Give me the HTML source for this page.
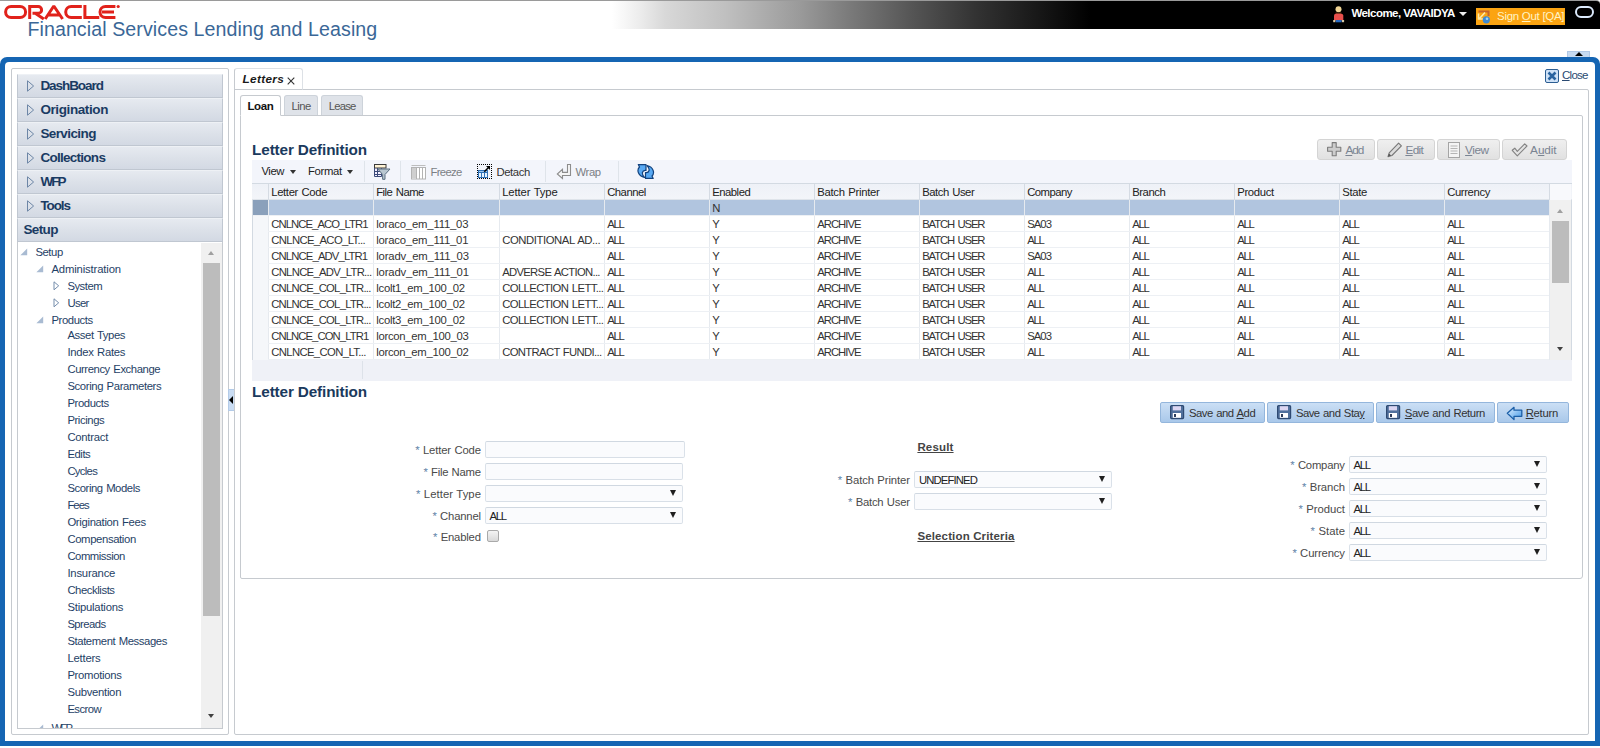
<!DOCTYPE html>
<html><head><meta charset="utf-8"><title>Letters</title>
<style>
*{box-sizing:border-box;margin:0;padding:0}
html,body{width:1600px;height:748px;overflow:hidden;background:#fff;font-family:"Liberation Sans",sans-serif;font-size:11px;color:#333}
.abs{position:absolute}
#hdr{position:absolute;left:0;top:0;width:1600px;height:28.6px;background:linear-gradient(to right,#fff 0,#fff 612px,#ececec 640px,#d8d8d8 665px,#c0c0c0 725px,#9a9a9a 800px,#7a7a7a 850px,#555 912px,#333 975px,#181818 1037px,#000 1090px,#000 1600px);border-top:1px solid #9a9a9a;border-radius:0 4px 0 0}
#frame{position:absolute;left:0;top:57px;width:1600px;height:689px;background:#1565b3;border-radius:7px 7px 0 0}
#frameIn{position:absolute;left:5px;top:5px;width:1590px;height:679px;background:#fff;border-radius:4px 4px 0 0}
.t{position:absolute;white-space:nowrap;line-height:1}
.t i{font-style:normal;color:#5f84a8}
.acc{position:absolute;left:17px;width:206px;height:24px;background:linear-gradient(#e6eaf0 0,#dce1e9 50%,#d3d9e3 100%);border:1px solid #c0c7d1;border-top-color:#eef1f5}
.inp{position:absolute;height:17px;border:1px solid;border-color:#d0d8e1 #dae1e9 #d8dfe7 #dae1e9;border-radius:2px;background:#fafbfd}
.inp b{position:absolute;right:6px;top:4px;width:0;height:0;border-left:3.5px solid transparent;border-right:3.5px solid transparent;border-top:6px solid #1f1f1f}
.btn{position:absolute;top:139px;height:21px;border:1px solid #d4d4d4;border-radius:3px;background:linear-gradient(#efefef,#e1e1e1)}
.sbtn{position:absolute;top:402px;height:21px;border:1px solid #94b6dc;border-radius:2px;background:linear-gradient(#cbdff5,#a9c8ea)}
u{text-decoration:underline}
</style></head><body>

<div id="hdr"></div>
<svg class="abs" style="left:0;top:0" width="124" height="24" viewBox="0 0 124 24">
<g fill="none" stroke="#e1221b" stroke-width="3" stroke-linejoin="miter">
<rect x="5.6" y="6.5" width="20" height="11" rx="5.5"/>
<path d="M29.7 19V6.5H38.2a3.4 3.4 0 0 1 0 6.8H32.5M35.2 13.3L43.8 19"/>
<path d="M45.2 19L53.8 6L62.6 19M48.5 15H59.5" stroke-miterlimit="1"/>
<path d="M81.8 6.500H71.200a5.500 5.500 0 0 0 0 11H81.800"/>
<path d="M84.900 5V17.500H99.300"/>
<path d="M115.400 6.500H105.500a5.500 5.500 0 0 0 0 11H115.400M102 12H114"/>
</g><circle cx="118.200" cy="6.500" r="1.600" fill="#e1221b"/></svg>
<div class="t" style="left:27.40px;top:20px;font-size:19.6px;color:#3a6797;letter-spacing:0.094px;">Financial Services Lending and Leasing</div>
<svg class="abs" style="left:1330px;top:4px" width="18" height="22" viewBox="0 0 18 22">
<circle cx="8.5" cy="5.3" r="3" fill="#f1d595"/><path d="M5.5 8.5h6v1.5h-6z" fill="#5a2a10"/>
<path d="M4 11.5Q4 9.7 6 9.7H11Q13.3 9.7 13.3 11.5V16.5H4Z" fill="#e9504c"/>
<rect x="3.2" y="16" width="2.2" height="2.2" fill="#d9c9a3"/><rect x="11.9" y="16" width="2.2" height="2.2" fill="#d9c9a3"/>
<rect x="5.8" y="16" width="5.8" height="2.3" fill="#2a6cc4"/></svg>
<div class="t" style="left:1351.40px;top:8px;font-size:11.5px;color:#ffffff;letter-spacing:-0.530px;font-weight:bold;">Welcome, VAVAIDYA</div>
<div class="abs" style="left:1459px;top:12px;width:0;height:0;border-left:4px solid transparent;border-right:4px solid transparent;border-top:4px solid #eee"></div>
<div class="abs" style="left:1476px;top:8px;width:89px;height:17px;background:#fba412"></div>
<svg class="abs" style="left:1477px;top:10px" width="14" height="15" viewBox="0 0 14 15">
<path d="M1.5 1.5H11.5V6" stroke="#c8642a" stroke-width="2" fill="none"/><path d="M1.5 3.5V9H6.5M2 9L8 2.5" stroke="#ffe9a8" stroke-width="1.6" fill="none"/>
<circle cx="9.3" cy="9.8" r="3.6" fill="#3f8ad2"/><circle cx="10" cy="8.8" r="1.3" fill="#a8d4f4"/></svg>
<div class="t" style="left:1497.00px;top:11px;font-size:11.5px;color:#fff3c4;letter-spacing:-0.287px;">Sign <u>O</u>ut [QA]</div>
<div class="abs" style="left:1575px;top:6px;width:19px;height:12px;border:2px solid #dceafc;border-radius:6px"></div>
<div class="abs" style="left:1567px;top:51px;width:23px;height:7px;background:#c6daf1;border:1px solid #b0c8e6"></div>
<div class="abs" style="left:1575px;top:52px;width:0;height:0;border-left:4px solid transparent;border-right:4px solid transparent;border-bottom:4px solid #000"></div>
<div id="frame"><div id="frameIn"></div></div>
<div class="abs" style="left:11px;top:68px;width:218px;height:667px;border:1px solid #c6cacf;border-radius:2px"></div>
<div class="acc" style="top:74px"><svg class="abs" style="left:8px;top:5px" width="10" height="12" viewBox="0 0 10 12"><path d="M1.5 0.8L7.6 6L1.5 11.2Z" fill="none" stroke="#6d86a6" stroke-width="1"/></svg></div>
<div class="t" style="left:40.40px;top:79px;font-size:13.5px;color:#1a3b63;letter-spacing:-1.065px;font-weight:bold;">DashBoard</div>
<div class="acc" style="top:98px"><svg class="abs" style="left:8px;top:5px" width="10" height="12" viewBox="0 0 10 12"><path d="M1.5 0.8L7.6 6L1.5 11.2Z" fill="none" stroke="#6d86a6" stroke-width="1"/></svg></div>
<div class="t" style="left:40.40px;top:103px;font-size:13.5px;color:#1a3b63;letter-spacing:-0.400px;font-weight:bold;">Origination</div>
<div class="acc" style="top:122px"><svg class="abs" style="left:8px;top:5px" width="10" height="12" viewBox="0 0 10 12"><path d="M1.5 0.8L7.6 6L1.5 11.2Z" fill="none" stroke="#6d86a6" stroke-width="1"/></svg></div>
<div class="t" style="left:40.40px;top:127px;font-size:13.5px;color:#1a3b63;letter-spacing:-0.597px;font-weight:bold;">Servicing</div>
<div class="acc" style="top:146px"><svg class="abs" style="left:8px;top:5px" width="10" height="12" viewBox="0 0 10 12"><path d="M1.5 0.8L7.6 6L1.5 11.2Z" fill="none" stroke="#6d86a6" stroke-width="1"/></svg></div>
<div class="t" style="left:40.40px;top:151px;font-size:13.5px;color:#1a3b63;letter-spacing:-0.726px;font-weight:bold;">Collections</div>
<div class="acc" style="top:170px"><svg class="abs" style="left:8px;top:5px" width="10" height="12" viewBox="0 0 10 12"><path d="M1.5 0.8L7.6 6L1.5 11.2Z" fill="none" stroke="#6d86a6" stroke-width="1"/></svg></div>
<div class="t" style="left:40.40px;top:175px;font-size:13.5px;color:#1a3b63;letter-spacing:-1.997px;font-weight:bold;">WFP</div>
<div class="acc" style="top:194px"><svg class="abs" style="left:8px;top:5px" width="10" height="12" viewBox="0 0 10 12"><path d="M1.5 0.8L7.6 6L1.5 11.2Z" fill="none" stroke="#6d86a6" stroke-width="1"/></svg></div>
<div class="t" style="left:40.40px;top:199px;font-size:13.5px;color:#1a3b63;letter-spacing:-1.124px;font-weight:bold;">Tools</div>
<div class="acc" style="top:218px"></div>
<div class="t" style="left:23.40px;top:223px;font-size:13.5px;color:#1a3b63;letter-spacing:-0.626px;font-weight:bold;">Setup</div>
<div class="abs" style="left:17px;top:242px;width:206px;height:487px;border:1px solid #c6cacf;border-top:none;background:#fff"></div>
<div class="abs" style="left:201px;top:243px;width:21px;height:485px;background:#f0f0f0"></div>
<div class="abs" style="left:203px;top:263px;width:17px;height:353px;background:#bcbcbc"></div>
<div class="abs" style="left:208px;top:251px;width:0;height:0;border-left:3.5px solid transparent;border-right:3.5px solid transparent;border-bottom:4px solid #a0a0a0"></div>
<div class="abs" style="left:208px;top:714px;width:0;height:0;border-left:3.5px solid transparent;border-right:3.5px solid transparent;border-top:4px solid #404040"></div>
<div class="t" style="left:35.40px;top:247px;font-size:11.3px;color:#1f3f66;letter-spacing:-0.430px;">Setup</div>
<svg class="abs" style="left:20px;top:248px" width="8" height="8" viewBox="0 0 8 8"><path d="M7.2 0.4V7.2H0.4Z" fill="#a9bbd2"/></svg>
<div class="t" style="left:51.40px;top:264px;font-size:11.3px;color:#1f3f66;letter-spacing:-0.145px;">Administration</div>
<svg class="abs" style="left:36px;top:265px" width="8" height="8" viewBox="0 0 8 8"><path d="M7.2 0.4V7.2H0.4Z" fill="#a9bbd2"/></svg>
<div class="t" style="left:67.40px;top:281px;font-size:11.3px;color:#1f3f66;letter-spacing:-0.488px;">System</div>
<svg class="abs" style="left:53px;top:280.5px" width="7" height="10" viewBox="0 0 7 10"><path d="M1 0.800L5.700 4.800L1 8.800Z" fill="#fff" stroke="#6f88a8" stroke-width="0.95"/></svg>
<div class="t" style="left:67.40px;top:298px;font-size:11.3px;color:#1f3f66;letter-spacing:-0.659px;">User</div>
<svg class="abs" style="left:53px;top:297.5px" width="7" height="10" viewBox="0 0 7 10"><path d="M1 0.800L5.700 4.800L1 8.800Z" fill="#fff" stroke="#6f88a8" stroke-width="0.95"/></svg>
<div class="t" style="left:51.40px;top:315px;font-size:11.3px;color:#1f3f66;letter-spacing:-0.388px;">Products</div>
<svg class="abs" style="left:36px;top:316px" width="8" height="8" viewBox="0 0 8 8"><path d="M7.2 0.4V7.2H0.4Z" fill="#a9bbd2"/></svg>
<div class="t" style="left:67.40px;top:330px;font-size:11.3px;color:#1f3f66;letter-spacing:-0.398px;word-spacing:0.695px;">Asset Types</div>
<div class="t" style="left:67.40px;top:347px;font-size:11.3px;color:#1f3f66;letter-spacing:-0.287px;word-spacing:0.583px;">Index Rates</div>
<div class="t" style="left:67.40px;top:364px;font-size:11.3px;color:#1f3f66;letter-spacing:-0.422px;word-spacing:0.718px;">Currency Exchange</div>
<div class="t" style="left:67.40px;top:381px;font-size:11.3px;color:#1f3f66;letter-spacing:-0.369px;word-spacing:0.665px;">Scoring Parameters</div>
<div class="t" style="left:67.40px;top:398px;font-size:11.3px;color:#1f3f66;letter-spacing:-0.388px;">Products</div>
<div class="t" style="left:67.40px;top:415px;font-size:11.3px;color:#1f3f66;letter-spacing:-0.418px;">Pricings</div>
<div class="t" style="left:67.40px;top:432px;font-size:11.3px;color:#1f3f66;letter-spacing:-0.260px;">Contract</div>
<div class="t" style="left:67.40px;top:449px;font-size:11.3px;color:#1f3f66;letter-spacing:-0.439px;">Edits</div>
<div class="t" style="left:67.40px;top:466px;font-size:11.3px;color:#1f3f66;letter-spacing:-0.701px;">Cycles</div>
<div class="t" style="left:67.40px;top:483px;font-size:11.3px;color:#1f3f66;letter-spacing:-0.427px;word-spacing:0.723px;">Scoring Models</div>
<div class="t" style="left:67.40px;top:500px;font-size:11.3px;color:#1f3f66;letter-spacing:-0.962px;">Fees</div>
<div class="t" style="left:67.40px;top:517px;font-size:11.3px;color:#1f3f66;letter-spacing:-0.319px;word-spacing:0.615px;">Origination Fees</div>
<div class="t" style="left:67.40px;top:534px;font-size:11.3px;color:#1f3f66;letter-spacing:-0.368px;">Compensation</div>
<div class="t" style="left:67.40px;top:551px;font-size:11.3px;color:#1f3f66;letter-spacing:-0.459px;">Commission</div>
<div class="t" style="left:67.40px;top:568px;font-size:11.3px;color:#1f3f66;letter-spacing:-0.202px;">Insurance</div>
<div class="t" style="left:67.40px;top:585px;font-size:11.3px;color:#1f3f66;letter-spacing:-0.428px;">Checklists</div>
<div class="t" style="left:67.40px;top:602px;font-size:11.3px;color:#1f3f66;letter-spacing:-0.216px;">Stipulations</div>
<div class="t" style="left:67.40px;top:619px;font-size:11.3px;color:#1f3f66;letter-spacing:-0.560px;">Spreads</div>
<div class="t" style="left:67.40px;top:636px;font-size:11.3px;color:#1f3f66;letter-spacing:-0.403px;word-spacing:0.699px;">Statement Messages</div>
<div class="t" style="left:67.40px;top:653px;font-size:11.3px;color:#1f3f66;letter-spacing:-0.208px;">Letters</div>
<div class="t" style="left:67.40px;top:670px;font-size:11.3px;color:#1f3f66;letter-spacing:-0.304px;">Promotions</div>
<div class="t" style="left:67.40px;top:687px;font-size:11.3px;color:#1f3f66;letter-spacing:-0.279px;">Subvention</div>
<div class="t" style="left:67.40px;top:704px;font-size:11.3px;color:#1f3f66;letter-spacing:-0.557px;">Escrow</div>
<div class="abs" style="left:18px;top:719px;width:183px;height:9px;overflow:hidden">
<div class="t" style="left:33.40px;top:4px;font-size:11.3px;color:#1f3f66;letter-spacing:-1.695px;">WFP</div>
<svg class="abs" style="left:18px;top:5px" width="8" height="8" viewBox="0 0 8 8"><path d="M7.2 0.4V7.2H0.4Z" fill="#a9bbd2"/></svg>
</div>
<div class="abs" style="left:228px;top:389px;width:7px;height:22px;background:#c9dcf3;border:1px solid #b3cbe8"></div>
<div class="abs" style="left:229px;top:396px;width:0;height:0;border-top:4px solid transparent;border-bottom:4px solid transparent;border-right:4px solid #000"></div>
<div class="abs" style="left:234px;top:89px;width:1355px;height:646px;border:1px solid #c6cacf;border-radius:0 2px 2px 2px"></div>
<div class="abs" style="left:234px;top:68px;width:69px;height:22px;border:1px solid #dde1e6;border-bottom:1px solid #c6cacf;border-left-color:#c6cacf;border-radius:3px 3px 0 0;background:#fff"></div>
<div class="t" style="left:242.40px;top:74px;font-size:11.8px;color:#1a1a1a;letter-spacing:0.359px;font-weight:bold;font-style:italic;">Letters</div>
<svg class="abs" style="left:287px;top:77px" width="8" height="8" viewBox="0 0 8 8"><path d="M0.7 0.7L7.3 7.3M7.3 0.7L0.7 7.3" stroke="#333" stroke-width="1.1"/></svg>
<svg class="abs" style="left:1545px;top:69px" width="14" height="14" viewBox="0 0 14 14"><rect x="0.5" y="0.5" width="13" height="13" rx="1.5" fill="#cfe2f7" stroke="#2c5e92"/><path d="M3.5 3.5L10.5 10.5M10.5 3.5L3.5 10.5" stroke="#2a64a0" stroke-width="2.6"/></svg>
<div class="t" style="left:1562.00px;top:70px;font-size:11.5px;color:#2a4a72;letter-spacing:-0.726px;"><u>C</u>lose</div>
<div class="abs" style="left:240px;top:115px;width:1343px;height:464px;border:1px solid #c6cacf;border-radius:0 2px 3px 2px"></div>
<div class="abs" style="left:240px;top:95px;width:41px;height:21px;border:1px solid #c6cacf;border-bottom:1px solid #fff;border-radius:3px 3px 0 0;background:#fff"></div>
<div class="t" style="left:247.40px;top:101px;font-size:11.5px;color:#111;letter-spacing:-0.324px;font-weight:bold;">Loan</div>
<div class="abs" style="left:284px;top:95px;width:34px;height:20px;border:1px solid #cdd3da;border-bottom:none;border-radius:3px 3px 0 0;background:#dfe3e9"></div>
<div class="t" style="left:291.40px;top:101px;font-size:11.3px;color:#555;letter-spacing:-0.455px;">Line</div>
<div class="abs" style="left:321px;top:95px;width:42px;height:20px;border:1px solid #cdd3da;border-bottom:none;border-radius:3px 3px 0 0;background:#dfe3e9"></div>
<div class="t" style="left:328.80px;top:101px;font-size:11.3px;color:#555;letter-spacing:-0.822px;">Lease</div>
<div class="t" style="left:252.10px;top:142px;font-size:15.3px;color:#1b3a5d;letter-spacing:-0.144px;font-weight:bold;">Letter Definition</div>
<div class="t" style="left:252.10px;top:384px;font-size:15.3px;color:#1b3a5d;letter-spacing:-0.144px;font-weight:bold;">Letter Definition</div>
<div class="btn" style="left:1317px;width:58px"><svg class="abs" style="left:9px;top:2px" width="15" height="15" viewBox="0 0 15 15"><path d="M5.2 0.6h4v4.600h4.600v4h-4.600v4.600h-4v-4.600h-4.600v-4h4.600z" fill="#cdcdcd" stroke="#7c7c7c" stroke-width="1.1" stroke-linejoin="round"/></svg></div>
<div class="t" style="left:1345.40px;top:145px;font-size:11.8px;color:#7a8492;letter-spacing:-0.998px;"><u>A</u>dd</div>
<div class="btn" style="left:1377px;width:58px"><svg class="abs" style="left:9px;top:2px" width="16" height="16" viewBox="0 0 16 16"><path d="M1 14.600L2.200 10.800L11.600 1.200L14.400 3.900L4.900 13.500Z" fill="#dcdcdc" stroke="#777" stroke-width="1.100" stroke-linejoin="round"/><path d="M1 14.600L2 11.500L4.200 13.600Z" fill="#555"/></svg></div>
<div class="t" style="left:1405.40px;top:145px;font-size:11.8px;color:#7a8492;letter-spacing:-0.611px;"><u>E</u>dit</div>
<div class="btn" style="left:1437px;width:63px"><svg class="abs" style="left:9px;top:2px" width="14" height="16" viewBox="0 0 14 16"><rect x="1.5" y="0.5" width="11" height="15" fill="#f4f4f4" stroke="#a5a5a5"/><path d="M3.5 4h7M3.5 6.5h7M3.5 9h7M3.5 11.5h7" stroke="#b5b5b5"/></svg></div>
<div class="t" style="left:1465.10px;top:145px;font-size:11.8px;color:#7a8492;letter-spacing:-0.455px;"><u>V</u>iew</div>
<div class="btn" style="left:1502px;width:65px"><svg class="abs" style="left:8px;top:3px" width="18" height="14" viewBox="0 0 18 14"><path d="M1.200 7.300L3.800 5.200L6.300 8.300L13.700 0.900L16 3L6.300 12.800Z" fill="#e4e4e4" stroke="#828282" stroke-width="1.100" stroke-linejoin="round"/></svg></div>
<div class="t" style="left:1530.10px;top:145px;font-size:11.8px;color:#7a8492;letter-spacing:-0.099px;">A<u>u</u>dit</div>
<div class="abs" style="left:252px;top:160px;width:1320px;height:23px;background:#f3f5fb"></div>
<div class="t" style="left:261.40px;top:166px;font-size:11.3px;color:#222;letter-spacing:-0.403px;">View</div>
<div class="abs" style="left:290px;top:170px;width:0;height:0;border-left:3.5px solid transparent;border-right:3.5px solid transparent;border-top:4px solid #333"></div>
<div class="t" style="left:307.90px;top:166px;font-size:11.3px;color:#222;letter-spacing:-0.287px;">Format</div>
<div class="abs" style="left:347px;top:170px;width:0;height:0;border-left:3.5px solid transparent;border-right:3.5px solid transparent;border-top:4px solid #333"></div>
<div class="abs" style="left:364px;top:161px;width:1px;height:21px;background:#dfe4ea"></div>
<div class="abs" style="left:400px;top:161px;width:1px;height:21px;background:#dfe4ea"></div>
<div class="abs" style="left:545px;top:161px;width:1px;height:21px;background:#dfe4ea"></div>
<div class="abs" style="left:618px;top:161px;width:1px;height:21px;background:#dfe4ea"></div>
<svg class="abs" style="left:373px;top:163px" width="18" height="18" viewBox="0 0 18 18"><rect x="1.5" y="5" width="11" height="8.5" fill="#f3eeff"/><rect x="1.5" y="1.5" width="11.5" height="3.5" fill="#fff3d6" stroke="#3a3a3a"/><path d="M1.5 5V13.5H8.5M1.5 8.5H9M1.5 11.5H9M4.5 5V13.5M8.5 5V13.5" stroke="#3b4a78" fill="none"/><path d="M4.8 6H17L12 11.5V16.3H9.6V11.5Z" fill="#b9c7d1" stroke="#5b6e80"/></svg>
<svg class="abs" style="left:411px;top:164px" width="16" height="16" viewBox="0 0 16 16"><path d="M0.5 1.5H14.5" stroke="#bdbdbd"/><rect x="0.5" y="3.5" width="14" height="11.5" fill="#fff" stroke="#b3b3b3"/><rect x="1" y="4" width="4.5" height="10.5" fill="#cfcfcf"/><path d="M5.5 4V15M8.5 4V15M11.5 4V15" stroke="#b3b3b3"/></svg>
<div class="t" style="left:430.40px;top:167px;font-size:11.3px;color:#7b7f85;letter-spacing:-0.640px;">Freeze</div>
<svg class="abs" style="left:476px;top:163px" width="18" height="18" viewBox="0 0 18 18"><g fill="#000" shape-rendering="crispEdges"><rect x="1" y="1" width="1" height="1"/><rect x="1" y="15" width="1" height="1"/><rect x="1" y="1" width="1" height="1"/><rect x="15" y="1" width="1" height="1"/><rect x="3" y="1" width="1" height="1"/><rect x="3" y="15" width="1" height="1"/><rect x="1" y="3" width="1" height="1"/><rect x="15" y="3" width="1" height="1"/><rect x="5" y="1" width="1" height="1"/><rect x="5" y="15" width="1" height="1"/><rect x="1" y="5" width="1" height="1"/><rect x="15" y="5" width="1" height="1"/><rect x="7" y="1" width="1" height="1"/><rect x="7" y="15" width="1" height="1"/><rect x="1" y="7" width="1" height="1"/><rect x="15" y="7" width="1" height="1"/><rect x="9" y="1" width="1" height="1"/><rect x="9" y="15" width="1" height="1"/><rect x="1" y="9" width="1" height="1"/><rect x="15" y="9" width="1" height="1"/><rect x="11" y="1" width="1" height="1"/><rect x="11" y="15" width="1" height="1"/><rect x="1" y="11" width="1" height="1"/><rect x="15" y="11" width="1" height="1"/><rect x="13" y="1" width="1" height="1"/><rect x="13" y="15" width="1" height="1"/><rect x="1" y="13" width="1" height="1"/><rect x="15" y="13" width="1" height="1"/><rect x="15" y="1" width="1" height="1"/><rect x="15" y="15" width="1" height="1"/><rect x="1" y="15" width="1" height="1"/><rect x="15" y="15" width="1" height="1"/></g><rect x="2" y="7" width="10" height="8" fill="#2f72b8"/><rect x="3" y="8" width="8" height="1" fill="#9cc8f0"/><rect x="3" y="10" width="2" height="4" fill="#e8f4ff"/><rect x="6" y="10" width="2" height="4" fill="#e8f4ff"/><rect x="9" y="10" width="2" height="4" fill="#e8f4ff"/><path d="M8.3 8.7L13.5 3.5" stroke="#000" stroke-width="1.5"/><path d="M10 3H14V7Z" fill="#000"/></svg>
<div class="t" style="left:496.40px;top:167px;font-size:11.3px;color:#333;letter-spacing:-0.377px;">Detach</div>
<svg class="abs" style="left:556px;top:163px" width="17" height="17" viewBox="0 0 17 17"><path d="M11.5 1.5H14.5V12.5H6.5V15.5L1.3 11L6.5 6.3V9.4H11.5Z" fill="#f6f6f6" stroke="#8d8d8d" stroke-width="1.1"/></svg>
<div class="t" style="left:575.40px;top:167px;font-size:11.3px;color:#7b7f85;letter-spacing:-0.354px;">Wrap</div>
<svg class="abs" style="left:637px;top:163px" width="18" height="17" viewBox="0 0 18 17"><g fill="#58a9f3" stroke="#12427e" stroke-width="1.2" stroke-linejoin="round"><path d="M1.3 1.6H9V7.5C5 7 4 11 7.5 14.5C1 13 -0.5 7 2.5 4Z"/><path d="M16.2 15.400H8.5V9.5C12.5 10 13.5 6 10 2.5C16.5 4 18 10 15 13Z"/></g></svg>
<div class="abs" style="left:252px;top:183px;width:1320px;height:177px;border:1px solid #d3dae2;background:#fff"></div>
<div class="abs" style="left:252px;top:183px;width:1320px;height:17px;background:linear-gradient(#eef1f7,#f3f5f9);border-top:1px solid #d3dae2;border-bottom:1px solid #dfe4ea"></div>
<div class="abs" style="left:268px;top:184px;width:1px;height:16px;background:#d5dbe3"></div>
<div class="t" style="left:271.20px;top:187px;font-size:11.3px;color:#222;letter-spacing:-0.340px;word-spacing:0.636px;">Letter Code</div>
<div class="abs" style="left:373px;top:184px;width:1px;height:16px;background:#d5dbe3"></div>
<div class="t" style="left:376.20px;top:187px;font-size:11.3px;color:#222;letter-spacing:-0.520px;word-spacing:0.816px;">File Name</div>
<div class="abs" style="left:499px;top:184px;width:1px;height:16px;background:#d5dbe3"></div>
<div class="t" style="left:502.20px;top:187px;font-size:11.3px;color:#222;letter-spacing:-0.112px;word-spacing:0.408px;">Letter Type</div>
<div class="abs" style="left:604px;top:184px;width:1px;height:16px;background:#d5dbe3"></div>
<div class="t" style="left:607.20px;top:187px;font-size:11.3px;color:#222;letter-spacing:-0.502px;">Channel</div>
<div class="abs" style="left:709px;top:184px;width:1px;height:16px;background:#d5dbe3"></div>
<div class="t" style="left:712.20px;top:187px;font-size:11.3px;color:#222;letter-spacing:-0.487px;">Enabled</div>
<div class="abs" style="left:814px;top:184px;width:1px;height:16px;background:#d5dbe3"></div>
<div class="t" style="left:817.20px;top:187px;font-size:11.3px;color:#222;letter-spacing:-0.266px;word-spacing:0.562px;">Batch Printer</div>
<div class="abs" style="left:919px;top:184px;width:1px;height:16px;background:#d5dbe3"></div>
<div class="t" style="left:922.20px;top:187px;font-size:11.3px;color:#222;letter-spacing:-0.465px;word-spacing:0.761px;">Batch User</div>
<div class="abs" style="left:1024px;top:184px;width:1px;height:16px;background:#d5dbe3"></div>
<div class="t" style="left:1027.20px;top:187px;font-size:11.3px;color:#222;letter-spacing:-0.513px;">Company</div>
<div class="abs" style="left:1129px;top:184px;width:1px;height:16px;background:#d5dbe3"></div>
<div class="t" style="left:1132.20px;top:187px;font-size:11.3px;color:#222;letter-spacing:-0.449px;">Branch</div>
<div class="abs" style="left:1234px;top:184px;width:1px;height:16px;background:#d5dbe3"></div>
<div class="t" style="left:1237.20px;top:187px;font-size:11.3px;color:#222;letter-spacing:-0.330px;">Product</div>
<div class="abs" style="left:1339px;top:184px;width:1px;height:16px;background:#d5dbe3"></div>
<div class="t" style="left:1342.20px;top:187px;font-size:11.3px;color:#222;letter-spacing:-0.332px;">State</div>
<div class="abs" style="left:1444px;top:184px;width:1px;height:16px;background:#d5dbe3"></div>
<div class="t" style="left:1447.20px;top:187px;font-size:11.3px;color:#222;letter-spacing:-0.386px;">Currency</div>
<div class="abs" style="left:1549px;top:184px;width:1px;height:16px;background:#d5dbe3"></div>
<div class="abs" style="left:1550px;top:184px;width:21px;height:16px;background:#f8f9fc"></div>
<div class="abs" style="left:253px;top:200px;width:1296px;height:15px;background:#b1c5df"></div>
<div class="abs" style="left:253px;top:200px;width:15px;height:15px;background:#8aa0bb"></div>
<div class="t" style="left:712.20px;top:203px;font-size:11.3px;color:#333;letter-spacing:-0.824px;">N</div>
<div class="abs" style="left:268px;top:200px;width:1px;height:160px;background:#e6eaef"></div>
<div class="abs" style="left:373px;top:200px;width:1px;height:160px;background:#e6eaef"></div>
<div class="abs" style="left:499px;top:200px;width:1px;height:160px;background:#e6eaef"></div>
<div class="abs" style="left:604px;top:200px;width:1px;height:160px;background:#e6eaef"></div>
<div class="abs" style="left:709px;top:200px;width:1px;height:160px;background:#e6eaef"></div>
<div class="abs" style="left:814px;top:200px;width:1px;height:160px;background:#e6eaef"></div>
<div class="abs" style="left:919px;top:200px;width:1px;height:160px;background:#e6eaef"></div>
<div class="abs" style="left:1024px;top:200px;width:1px;height:160px;background:#e6eaef"></div>
<div class="abs" style="left:1129px;top:200px;width:1px;height:160px;background:#e6eaef"></div>
<div class="abs" style="left:1234px;top:200px;width:1px;height:160px;background:#e6eaef"></div>
<div class="abs" style="left:1339px;top:200px;width:1px;height:160px;background:#e6eaef"></div>
<div class="abs" style="left:1444px;top:200px;width:1px;height:160px;background:#e6eaef"></div>
<div class="abs" style="left:1549px;top:200px;width:1px;height:160px;background:#e6eaef"></div>
<div class="abs" style="left:253px;top:215px;width:1296px;height:1px;background:#edf0f4"></div>
<div class="abs" style="left:253px;top:231px;width:1296px;height:1px;background:#edf0f4"></div>
<div class="abs" style="left:253px;top:247px;width:1296px;height:1px;background:#edf0f4"></div>
<div class="abs" style="left:253px;top:263px;width:1296px;height:1px;background:#edf0f4"></div>
<div class="abs" style="left:253px;top:279px;width:1296px;height:1px;background:#edf0f4"></div>
<div class="abs" style="left:253px;top:295px;width:1296px;height:1px;background:#edf0f4"></div>
<div class="abs" style="left:253px;top:311px;width:1296px;height:1px;background:#edf0f4"></div>
<div class="abs" style="left:253px;top:327px;width:1296px;height:1px;background:#edf0f4"></div>
<div class="abs" style="left:253px;top:343px;width:1296px;height:1px;background:#edf0f4"></div>
<div class="abs" style="left:253px;top:359px;width:1296px;height:1px;background:#edf0f4"></div>
<div class="abs" style="left:253px;top:216px;width:15px;height:144px;background:#f5f7fa"></div>
<div class="t" style="left:271.20px;top:219px;font-size:11.3px;color:#333;letter-spacing:-0.928px;">CNLNCE_ACO_LTR1</div>
<div class="t" style="left:376.20px;top:219px;font-size:11.3px;color:#333;letter-spacing:-0.182px;">loraco_em_111_03</div>
<div class="t" style="left:607.20px;top:219px;font-size:11.3px;color:#333;letter-spacing:-1.274px;">ALL</div>
<div class="t" style="left:712.20px;top:219px;font-size:11.3px;color:#333;letter-spacing:-1.157px;">Y</div>
<div class="t" style="left:817.20px;top:219px;font-size:11.3px;color:#333;letter-spacing:-0.980px;">ARCHIVE</div>
<div class="t" style="left:922.20px;top:219px;font-size:11.3px;color:#333;letter-spacing:-1.116px;word-spacing:1.412px;">BATCH USER</div>
<div class="t" style="left:1027.20px;top:219px;font-size:11.3px;color:#333;letter-spacing:-0.968px;">SA03</div>
<div class="t" style="left:1132.20px;top:219px;font-size:11.3px;color:#333;letter-spacing:-1.274px;">ALL</div>
<div class="t" style="left:1237.20px;top:219px;font-size:11.3px;color:#333;letter-spacing:-1.274px;">ALL</div>
<div class="t" style="left:1342.20px;top:219px;font-size:11.3px;color:#333;letter-spacing:-1.274px;">ALL</div>
<div class="t" style="left:1447.20px;top:219px;font-size:11.3px;color:#333;letter-spacing:-1.274px;">ALL</div>
<div class="t" style="left:271.20px;top:235px;font-size:11.3px;color:#333;letter-spacing:-0.637px;">CNLNCE_ACO_LT...</div>
<div class="t" style="left:376.20px;top:235px;font-size:11.3px;color:#333;letter-spacing:-0.182px;">loraco_em_111_01</div>
<div class="t" style="left:502.20px;top:235px;font-size:11.3px;color:#333;letter-spacing:-0.412px;word-spacing:0.708px;">CONDITIONAL AD...</div>
<div class="t" style="left:607.20px;top:235px;font-size:11.3px;color:#333;letter-spacing:-1.274px;">ALL</div>
<div class="t" style="left:712.20px;top:235px;font-size:11.3px;color:#333;letter-spacing:-1.157px;">Y</div>
<div class="t" style="left:817.20px;top:235px;font-size:11.3px;color:#333;letter-spacing:-0.980px;">ARCHIVE</div>
<div class="t" style="left:922.20px;top:235px;font-size:11.3px;color:#333;letter-spacing:-1.116px;word-spacing:1.412px;">BATCH USER</div>
<div class="t" style="left:1027.20px;top:235px;font-size:11.3px;color:#333;letter-spacing:-1.274px;">ALL</div>
<div class="t" style="left:1132.20px;top:235px;font-size:11.3px;color:#333;letter-spacing:-1.274px;">ALL</div>
<div class="t" style="left:1237.20px;top:235px;font-size:11.3px;color:#333;letter-spacing:-1.274px;">ALL</div>
<div class="t" style="left:1342.20px;top:235px;font-size:11.3px;color:#333;letter-spacing:-1.274px;">ALL</div>
<div class="t" style="left:1447.20px;top:235px;font-size:11.3px;color:#333;letter-spacing:-1.274px;">ALL</div>
<div class="t" style="left:271.20px;top:251px;font-size:11.3px;color:#333;letter-spacing:-0.863px;">CNLNCE_ADV_LTR1</div>
<div class="t" style="left:376.20px;top:251px;font-size:11.3px;color:#333;letter-spacing:-0.148px;">loradv_em_111_03</div>
<div class="t" style="left:607.20px;top:251px;font-size:11.3px;color:#333;letter-spacing:-1.274px;">ALL</div>
<div class="t" style="left:712.20px;top:251px;font-size:11.3px;color:#333;letter-spacing:-1.157px;">Y</div>
<div class="t" style="left:817.20px;top:251px;font-size:11.3px;color:#333;letter-spacing:-0.980px;">ARCHIVE</div>
<div class="t" style="left:922.20px;top:251px;font-size:11.3px;color:#333;letter-spacing:-1.116px;word-spacing:1.412px;">BATCH USER</div>
<div class="t" style="left:1027.20px;top:251px;font-size:11.3px;color:#333;letter-spacing:-0.968px;">SA03</div>
<div class="t" style="left:1132.20px;top:251px;font-size:11.3px;color:#333;letter-spacing:-1.274px;">ALL</div>
<div class="t" style="left:1237.20px;top:251px;font-size:11.3px;color:#333;letter-spacing:-1.274px;">ALL</div>
<div class="t" style="left:1342.20px;top:251px;font-size:11.3px;color:#333;letter-spacing:-1.274px;">ALL</div>
<div class="t" style="left:1447.20px;top:251px;font-size:11.3px;color:#333;letter-spacing:-1.274px;">ALL</div>
<div class="t" style="left:271.20px;top:267px;font-size:11.3px;color:#333;letter-spacing:-0.701px;">CNLNCE_ADV_LTR...</div>
<div class="t" style="left:376.20px;top:267px;font-size:11.3px;color:#333;letter-spacing:-0.148px;">loradv_em_111_01</div>
<div class="t" style="left:502.20px;top:267px;font-size:11.3px;color:#333;letter-spacing:-0.709px;word-spacing:1.005px;">ADVERSE ACTION...</div>
<div class="t" style="left:607.20px;top:267px;font-size:11.3px;color:#333;letter-spacing:-1.274px;">ALL</div>
<div class="t" style="left:712.20px;top:267px;font-size:11.3px;color:#333;letter-spacing:-1.157px;">Y</div>
<div class="t" style="left:817.20px;top:267px;font-size:11.3px;color:#333;letter-spacing:-0.980px;">ARCHIVE</div>
<div class="t" style="left:922.20px;top:267px;font-size:11.3px;color:#333;letter-spacing:-1.116px;word-spacing:1.412px;">BATCH USER</div>
<div class="t" style="left:1027.20px;top:267px;font-size:11.3px;color:#333;letter-spacing:-1.274px;">ALL</div>
<div class="t" style="left:1132.20px;top:267px;font-size:11.3px;color:#333;letter-spacing:-1.274px;">ALL</div>
<div class="t" style="left:1237.20px;top:267px;font-size:11.3px;color:#333;letter-spacing:-1.274px;">ALL</div>
<div class="t" style="left:1342.20px;top:267px;font-size:11.3px;color:#333;letter-spacing:-1.274px;">ALL</div>
<div class="t" style="left:1447.20px;top:267px;font-size:11.3px;color:#333;letter-spacing:-1.274px;">ALL</div>
<div class="t" style="left:271.20px;top:283px;font-size:11.3px;color:#333;letter-spacing:-0.750px;">CNLNCE_COL_LTR...</div>
<div class="t" style="left:376.20px;top:283px;font-size:11.3px;color:#333;letter-spacing:-0.234px;">lcolt1_em_100_02</div>
<div class="t" style="left:502.20px;top:283px;font-size:11.3px;color:#333;letter-spacing:-0.602px;word-spacing:0.899px;">COLLECTION LETT...</div>
<div class="t" style="left:607.20px;top:283px;font-size:11.3px;color:#333;letter-spacing:-1.274px;">ALL</div>
<div class="t" style="left:712.20px;top:283px;font-size:11.3px;color:#333;letter-spacing:-1.157px;">Y</div>
<div class="t" style="left:817.20px;top:283px;font-size:11.3px;color:#333;letter-spacing:-0.980px;">ARCHIVE</div>
<div class="t" style="left:922.20px;top:283px;font-size:11.3px;color:#333;letter-spacing:-1.116px;word-spacing:1.412px;">BATCH USER</div>
<div class="t" style="left:1027.20px;top:283px;font-size:11.3px;color:#333;letter-spacing:-1.274px;">ALL</div>
<div class="t" style="left:1132.20px;top:283px;font-size:11.3px;color:#333;letter-spacing:-1.274px;">ALL</div>
<div class="t" style="left:1237.20px;top:283px;font-size:11.3px;color:#333;letter-spacing:-1.274px;">ALL</div>
<div class="t" style="left:1342.20px;top:283px;font-size:11.3px;color:#333;letter-spacing:-1.274px;">ALL</div>
<div class="t" style="left:1447.20px;top:283px;font-size:11.3px;color:#333;letter-spacing:-1.274px;">ALL</div>
<div class="t" style="left:271.20px;top:299px;font-size:11.3px;color:#333;letter-spacing:-0.750px;">CNLNCE_COL_LTR...</div>
<div class="t" style="left:376.20px;top:299px;font-size:11.3px;color:#333;letter-spacing:-0.234px;">lcolt2_em_100_02</div>
<div class="t" style="left:502.20px;top:299px;font-size:11.3px;color:#333;letter-spacing:-0.602px;word-spacing:0.899px;">COLLECTION LETT...</div>
<div class="t" style="left:607.20px;top:299px;font-size:11.3px;color:#333;letter-spacing:-1.274px;">ALL</div>
<div class="t" style="left:712.20px;top:299px;font-size:11.3px;color:#333;letter-spacing:-1.157px;">Y</div>
<div class="t" style="left:817.20px;top:299px;font-size:11.3px;color:#333;letter-spacing:-0.980px;">ARCHIVE</div>
<div class="t" style="left:922.20px;top:299px;font-size:11.3px;color:#333;letter-spacing:-1.116px;word-spacing:1.412px;">BATCH USER</div>
<div class="t" style="left:1027.20px;top:299px;font-size:11.3px;color:#333;letter-spacing:-1.274px;">ALL</div>
<div class="t" style="left:1132.20px;top:299px;font-size:11.3px;color:#333;letter-spacing:-1.274px;">ALL</div>
<div class="t" style="left:1237.20px;top:299px;font-size:11.3px;color:#333;letter-spacing:-1.274px;">ALL</div>
<div class="t" style="left:1342.20px;top:299px;font-size:11.3px;color:#333;letter-spacing:-1.274px;">ALL</div>
<div class="t" style="left:1447.20px;top:299px;font-size:11.3px;color:#333;letter-spacing:-1.274px;">ALL</div>
<div class="t" style="left:271.20px;top:315px;font-size:11.3px;color:#333;letter-spacing:-0.750px;">CNLNCE_COL_LTR...</div>
<div class="t" style="left:376.20px;top:315px;font-size:11.3px;color:#333;letter-spacing:-0.234px;">lcolt3_em_100_02</div>
<div class="t" style="left:502.20px;top:315px;font-size:11.3px;color:#333;letter-spacing:-0.602px;word-spacing:0.899px;">COLLECTION LETT...</div>
<div class="t" style="left:607.20px;top:315px;font-size:11.3px;color:#333;letter-spacing:-1.274px;">ALL</div>
<div class="t" style="left:712.20px;top:315px;font-size:11.3px;color:#333;letter-spacing:-1.157px;">Y</div>
<div class="t" style="left:817.20px;top:315px;font-size:11.3px;color:#333;letter-spacing:-0.980px;">ARCHIVE</div>
<div class="t" style="left:922.20px;top:315px;font-size:11.3px;color:#333;letter-spacing:-1.116px;word-spacing:1.412px;">BATCH USER</div>
<div class="t" style="left:1027.20px;top:315px;font-size:11.3px;color:#333;letter-spacing:-1.274px;">ALL</div>
<div class="t" style="left:1132.20px;top:315px;font-size:11.3px;color:#333;letter-spacing:-1.274px;">ALL</div>
<div class="t" style="left:1237.20px;top:315px;font-size:11.3px;color:#333;letter-spacing:-1.274px;">ALL</div>
<div class="t" style="left:1342.20px;top:315px;font-size:11.3px;color:#333;letter-spacing:-1.274px;">ALL</div>
<div class="t" style="left:1447.20px;top:315px;font-size:11.3px;color:#333;letter-spacing:-1.274px;">ALL</div>
<div class="t" style="left:271.20px;top:331px;font-size:11.3px;color:#333;letter-spacing:-0.920px;">CNLNCE_CON_LTR1</div>
<div class="t" style="left:376.20px;top:331px;font-size:11.3px;color:#333;letter-spacing:-0.270px;">lorcon_em_100_03</div>
<div class="t" style="left:607.20px;top:331px;font-size:11.3px;color:#333;letter-spacing:-1.274px;">ALL</div>
<div class="t" style="left:712.20px;top:331px;font-size:11.3px;color:#333;letter-spacing:-1.157px;">Y</div>
<div class="t" style="left:817.20px;top:331px;font-size:11.3px;color:#333;letter-spacing:-0.980px;">ARCHIVE</div>
<div class="t" style="left:922.20px;top:331px;font-size:11.3px;color:#333;letter-spacing:-1.116px;word-spacing:1.412px;">BATCH USER</div>
<div class="t" style="left:1027.20px;top:331px;font-size:11.3px;color:#333;letter-spacing:-0.968px;">SA03</div>
<div class="t" style="left:1132.20px;top:331px;font-size:11.3px;color:#333;letter-spacing:-1.274px;">ALL</div>
<div class="t" style="left:1237.20px;top:331px;font-size:11.3px;color:#333;letter-spacing:-1.274px;">ALL</div>
<div class="t" style="left:1342.20px;top:331px;font-size:11.3px;color:#333;letter-spacing:-1.274px;">ALL</div>
<div class="t" style="left:1447.20px;top:331px;font-size:11.3px;color:#333;letter-spacing:-1.274px;">ALL</div>
<div class="t" style="left:271.20px;top:347px;font-size:11.3px;color:#333;letter-spacing:-0.629px;">CNLNCE_CON_LT...</div>
<div class="t" style="left:376.20px;top:347px;font-size:11.3px;color:#333;letter-spacing:-0.270px;">lorcon_em_100_02</div>
<div class="t" style="left:502.20px;top:347px;font-size:11.3px;color:#333;letter-spacing:-0.666px;word-spacing:0.962px;">CONTRACT FUNDI...</div>
<div class="t" style="left:607.20px;top:347px;font-size:11.3px;color:#333;letter-spacing:-1.274px;">ALL</div>
<div class="t" style="left:712.20px;top:347px;font-size:11.3px;color:#333;letter-spacing:-1.157px;">Y</div>
<div class="t" style="left:817.20px;top:347px;font-size:11.3px;color:#333;letter-spacing:-0.980px;">ARCHIVE</div>
<div class="t" style="left:922.20px;top:347px;font-size:11.3px;color:#333;letter-spacing:-1.116px;word-spacing:1.412px;">BATCH USER</div>
<div class="t" style="left:1027.20px;top:347px;font-size:11.3px;color:#333;letter-spacing:-1.274px;">ALL</div>
<div class="t" style="left:1132.20px;top:347px;font-size:11.3px;color:#333;letter-spacing:-1.274px;">ALL</div>
<div class="t" style="left:1237.20px;top:347px;font-size:11.3px;color:#333;letter-spacing:-1.274px;">ALL</div>
<div class="t" style="left:1342.20px;top:347px;font-size:11.3px;color:#333;letter-spacing:-1.274px;">ALL</div>
<div class="t" style="left:1447.20px;top:347px;font-size:11.3px;color:#333;letter-spacing:-1.274px;">ALL</div>
<div class="abs" style="left:1550px;top:200px;width:21px;height:160px;background:#f0f0f0"></div>
<div class="abs" style="left:1552px;top:221px;width:17px;height:62px;background:#bcbcbc"></div>
<div class="abs" style="left:1557px;top:209px;width:0;height:0;border-left:3.5px solid transparent;border-right:3.5px solid transparent;border-bottom:4px solid #a0a0a0"></div>
<div class="abs" style="left:1557px;top:347px;width:0;height:0;border-left:3.5px solid transparent;border-right:3.5px solid transparent;border-top:4px solid #404040"></div>
<div class="abs" style="left:252px;top:360px;width:1320px;height:21px;background:#eff1f7"></div>
<div class="abs" style="left:362px;top:361px;width:1px;height:18px;background:#dde2e9"></div>
<div class="sbtn" style="left:1160px;width:105px"><svg class="abs" style="left:9px;top:2px" width="15" height="15" viewBox="0 0 15 15"><rect x="0.6" y="0.6" width="13" height="13" rx="1" fill="#50709c" stroke="#2f4a72" stroke-width="1.2"/><rect x="2.8" y="1.2" width="8.2" height="4.2" fill="#dcd6f2"/><rect x="2.8" y="8" width="8.2" height="4.8" fill="#fff"/><rect x="4" y="9" width="2" height="3" fill="#2f3e5c"/></svg></div>
<div class="t" style="left:1188.90px;top:408px;font-size:11.3px;color:#333;letter-spacing:-0.463px;word-spacing:0.760px;">Save and <u>A</u>dd</div>
<div class="sbtn" style="left:1267px;width:107px"><svg class="abs" style="left:9px;top:2px" width="15" height="15" viewBox="0 0 15 15"><rect x="0.6" y="0.6" width="13" height="13" rx="1" fill="#50709c" stroke="#2f4a72" stroke-width="1.2"/><rect x="2.8" y="1.2" width="8.2" height="4.2" fill="#dcd6f2"/><rect x="2.8" y="8" width="8.2" height="4.8" fill="#fff"/><rect x="4" y="9" width="2" height="3" fill="#2f3e5c"/></svg></div>
<div class="t" style="left:1295.90px;top:408px;font-size:11.3px;color:#333;letter-spacing:-0.500px;word-spacing:0.796px;">Save and Sta<u>y</u></div>
<div class="sbtn" style="left:1376px;width:119px"><svg class="abs" style="left:9px;top:2px" width="15" height="15" viewBox="0 0 15 15"><rect x="0.6" y="0.6" width="13" height="13" rx="1" fill="#50709c" stroke="#2f4a72" stroke-width="1.2"/><rect x="2.8" y="1.2" width="8.2" height="4.2" fill="#dcd6f2"/><rect x="2.8" y="8" width="8.2" height="4.8" fill="#fff"/><rect x="4" y="9" width="2" height="3" fill="#2f3e5c"/></svg></div>
<div class="t" style="left:1404.80px;top:408px;font-size:11.3px;color:#333;letter-spacing:-0.404px;word-spacing:0.700px;"><u>S</u>ave and Return</div>
<div class="sbtn" style="left:1497px;width:72px"><svg class="abs" style="left:8px;top:3px" width="18" height="15" viewBox="0 0 18 15"><defs><linearGradient id="ag" x1="0" y1="0" x2="1" y2="1"><stop offset="0" stop-color="#e4f2ff"/><stop offset="1" stop-color="#3f97e8"/></linearGradient></defs><path d="M8 1.3L1.3 7.3L8 13.6V10.3H15.8V4.2H8Z" fill="url(#ag)" stroke="#1b5fa8" stroke-width="1.3" stroke-linejoin="round"/></svg></div>
<div class="t" style="left:1525.70px;top:408px;font-size:11.3px;color:#333;letter-spacing:-0.279px;"><u>R</u>eturn</div>
<div class="inp" style="left:485px;top:441px;width:200px"></div>
<div class="t" style="left:415.27px;top:445px;font-size:11.3px;color:#4a4a4a;letter-spacing:-0.145px;word-spacing:0.441px;"><i>*</i> Letter Code</div>
<div class="inp" style="left:485px;top:463px;width:198px"></div>
<div class="t" style="left:423.41px;top:467px;font-size:11.3px;color:#4a4a4a;letter-spacing:-0.254px;word-spacing:0.550px;"><i>*</i> File Name</div>
<div class="inp" style="left:485px;top:485px;width:198px"><b></b></div>
<div class="t" style="left:415.93px;top:489px;font-size:11.3px;color:#4a4a4a;letter-spacing:0.061px;word-spacing:0.235px;"><i>*</i> Letter Type</div>
<div class="inp" style="left:485px;top:507px;width:198px"><b></b></div>
<div class="t" style="left:432.47px;top:511px;font-size:11.3px;color:#4a4a4a;letter-spacing:-0.200px;word-spacing:0.496px;"><i>*</i> Channel</div>
<div class="t" style="left:489.40px;top:511px;font-size:11.3px;color:#222;letter-spacing:-1.274px;">ALL</div>
<div class="t" style="left:433.01px;top:532px;font-size:11.3px;color:#4a4a4a;letter-spacing:-0.188px;word-spacing:0.484px;"><i>*</i> Enabled</div>
<div class="abs" style="left:487px;top:530px;width:12px;height:12px;border:1px solid #a9a9a9;border-radius:2px;background:linear-gradient(#f4f4f4,#d9d9d9)"></div>
<div class="t" style="left:917.40px;top:442px;font-size:11.5px;color:#444;letter-spacing:0.171px;font-weight:bold;text-decoration:underline">Result</div>
<div class="inp" style="left:914px;top:471px;width:198px"><b></b></div>
<div class="t" style="left:837.87px;top:475px;font-size:11.3px;color:#4a4a4a;letter-spacing:-0.110px;word-spacing:0.406px;"><i>*</i> Batch Printer</div>
<div class="t" style="left:918.90px;top:475px;font-size:11.3px;color:#222;letter-spacing:-0.867px;">UNDEFINED</div>
<div class="inp" style="left:914px;top:493px;width:198px"><b></b></div>
<div class="t" style="left:848.09px;top:497px;font-size:11.3px;color:#4a4a4a;letter-spacing:-0.235px;word-spacing:0.531px;"><i>*</i> Batch User</div>
<div class="t" style="left:917.40px;top:531px;font-size:11.5px;color:#444;letter-spacing:0.142px;font-weight:bold;text-decoration:underline">Selection Criteria</div>
<div class="inp" style="left:1349px;top:456px;width:198px"><b></b></div>
<div class="t" style="left:1290.27px;top:460px;font-size:11.3px;color:#4a4a4a;letter-spacing:-0.210px;word-spacing:0.506px;"><i>*</i> Company</div>
<div class="t" style="left:1353.40px;top:460px;font-size:11.3px;color:#222;letter-spacing:-1.274px;">ALL</div>
<div class="inp" style="left:1349px;top:478px;width:198px"><b></b></div>
<div class="t" style="left:1302.00px;top:482px;font-size:11.3px;color:#4a4a4a;letter-spacing:-0.106px;word-spacing:0.402px;"><i>*</i> Branch</div>
<div class="t" style="left:1353.40px;top:482px;font-size:11.3px;color:#222;letter-spacing:-1.274px;">ALL</div>
<div class="inp" style="left:1349px;top:500px;width:198px"><b></b></div>
<div class="t" style="left:1298.59px;top:504px;font-size:11.3px;color:#4a4a4a;letter-spacing:-0.053px;word-spacing:0.349px;"><i>*</i> Product</div>
<div class="t" style="left:1353.40px;top:504px;font-size:11.3px;color:#222;letter-spacing:-1.274px;">ALL</div>
<div class="inp" style="left:1349px;top:522px;width:198px"><b></b></div>
<div class="t" style="left:1310.50px;top:526px;font-size:11.3px;color:#4a4a4a;letter-spacing:0.056px;word-spacing:0.240px;"><i>*</i> State</div>
<div class="t" style="left:1353.40px;top:526px;font-size:11.3px;color:#222;letter-spacing:-1.274px;">ALL</div>
<div class="inp" style="left:1349px;top:544px;width:198px"><b></b></div>
<div class="t" style="left:1292.42px;top:548px;font-size:11.3px;color:#4a4a4a;letter-spacing:-0.136px;word-spacing:0.433px;"><i>*</i> Currency</div>
<div class="t" style="left:1353.40px;top:548px;font-size:11.3px;color:#222;letter-spacing:-1.274px;">ALL</div>
</body></html>
